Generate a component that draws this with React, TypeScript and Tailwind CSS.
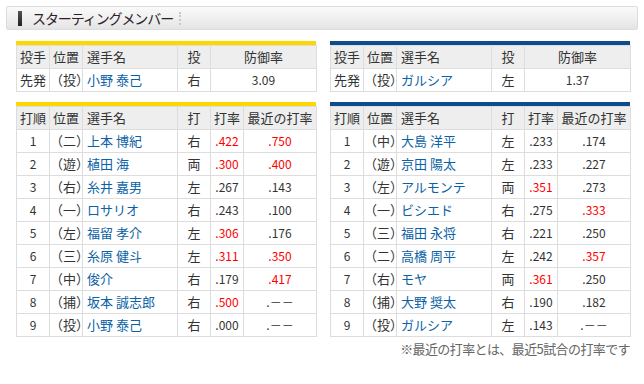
import React from "react";

type Bat = { o: string; p: string; n: string; h: string; a: string; ar?: boolean; r: string; rr?: boolean };

const left: Bat[] = [
  { o: "1", p: "（二）", n: "上本 博紀", h: "右", a: ".422", ar: true, r: ".750", rr: true },
  { o: "2", p: "（遊）", n: "植田 海", h: "両", a: ".300", ar: true, r: ".400", rr: true },
  { o: "3", p: "（右）", n: "糸井 嘉男", h: "左", a: ".267", r: ".143" },
  { o: "4", p: "（一）", n: "ロサリオ", h: "右", a: ".243", r: ".100" },
  { o: "5", p: "（左）", n: "福留 孝介", h: "左", a: ".306", ar: true, r: ".176" },
  { o: "6", p: "（三）", n: "糸原 健斗", h: "左", a: ".311", ar: true, r: ".350", rr: true },
  { o: "7", p: "（中）", n: "俊介", h: "右", a: ".179", r: ".417", rr: true },
  { o: "8", p: "（捕）", n: "坂本 誠志郎", h: "右", a: ".500", ar: true, r: ".－－" },
  { o: "9", p: "（投）", n: "小野 泰己", h: "右", a: ".000", r: ".－－" },
];

const right: Bat[] = [
  { o: "1", p: "（中）", n: "大島 洋平", h: "左", a: ".233", r: ".174" },
  { o: "2", p: "（遊）", n: "京田 陽太", h: "左", a: ".233", r: ".227" },
  { o: "3", p: "（左）", n: "アルモンテ", h: "両", a: ".351", ar: true, r: ".273" },
  { o: "4", p: "（一）", n: "ビシエド", h: "右", a: ".275", r: ".333", rr: true },
  { o: "5", p: "（三）", n: "福田 永将", h: "右", a: ".221", r: ".250" },
  { o: "6", p: "（二）", n: "高橋 周平", h: "左", a: ".242", r: ".357", rr: true },
  { o: "7", p: "（右）", n: "モヤ", h: "両", a: ".361", ar: true, r: ".250" },
  { o: "8", p: "（捕）", n: "大野 奨太", h: "右", a: ".190", r: ".182" },
  { o: "9", p: "（投）", n: "ガルシア", h: "左", a: ".143", r: ".－－" },
];

const th = "h-[23px] border border-[#dddddd] bg-[#eeeeee] font-normal p-0 leading-[22px]";
const td = "h-[23px] border border-[#dddddd] bg-white p-0 leading-[22px]";

function PitcherTable({ bar, name, hand, era }: { bar: string; name: string; hand: string; era: string }) {
  return (
    <div className="w-[300px]">
      <div className={`h-[4px] ${bar}`} />
      <table className="w-[300px] table-fixed border-collapse text-[13px] text-[#333333]">
        <colgroup>
          <col className="w-[33px]" />
          <col className="w-[33px]" />
          <col className="w-[95px]" />
          <col className="w-[33px]" />
          <col className="w-[106px]" />
        </colgroup>
        <thead>
          <tr>
            <th className={`${th} text-center`}>投手</th>
            <th className={`${th} text-center`}>位置</th>
            <th className={`${th} text-left pl-[4px]`}>選手名</th>
            <th className={`${th} text-center`}>投</th>
            <th className={`${th} text-center`}>防御率</th>
          </tr>
        </thead>
        <tbody>
          <tr>
            <td className={`${td} text-center`}>先発</td>
            <td className={`${td} text-center`}>（投）</td>
            <td className={`${td} text-left pl-[4px] text-[#0b62a6]`}>{name}</td>
            <td className={`${td} text-center`}>{hand}</td>
            <td className={`${td} text-center text-[12px]`}>{era}</td>
          </tr>
        </tbody>
      </table>
    </div>
  );
}

function BatTable({ bar, rows }: { bar: string; rows: Bat[] }) {
  return (
    <div className="w-[300px]">
      <div className={`h-[4px] ${bar}`} />
      <table className="w-[300px] table-fixed border-collapse text-[13px] text-[#333333]">
        <colgroup>
          <col className="w-[33px]" />
          <col className="w-[33px]" />
          <col className="w-[95px]" />
          <col className="w-[33px]" />
          <col className="w-[33px]" />
          <col className="w-[73px]" />
        </colgroup>
        <thead>
          <tr>
            <th className={`${th} text-center`}>打順</th>
            <th className={`${th} text-center`}>位置</th>
            <th className={`${th} text-left pl-[4px]`}>選手名</th>
            <th className={`${th} text-center`}>打</th>
            <th className={`${th} text-center`}>打率</th>
            <th className={`${th} text-center`}>最近の打率</th>
          </tr>
        </thead>
        <tbody>
          {rows.map((r) => (
            <tr key={r.o}>
              <td className={`${td} text-center text-[12px]`}>{r.o}</td>
              <td className={`${td} text-center`}>{r.p}</td>
              <td className={`${td} text-left pl-[4px] text-[#0b62a6]`}>{r.n}</td>
              <td className={`${td} text-center`}>{r.h}</td>
              <td className={`${td} text-center text-[12px] ${r.ar ? "text-[#ff0000]" : ""}`}>{r.a}</td>
              <td className={`${td} text-center text-[12px] ${r.rr ? "text-[#ff0000]" : ""}`}>{r.r}</td>
            </tr>
          ))}
        </tbody>
      </table>
    </div>
  );
}

export default function App() {
  return (
    <div className="w-[644px] h-[384px] bg-white pt-[6px] px-[6px] font-['Noto_Sans_CJK_JP','Noto_Sans',sans-serif] overflow-hidden">
      <div className="h-[24px] rounded-[2px] border border-[#dddddd] bg-gradient-to-b from-[#fafafa] via-[#f0f0f0] to-[#e4e4e4] flex items-center">
        <div className="ml-[11px] w-[4px] h-[15px] bg-gradient-to-b from-[#555555] to-[#222222]" />
        <span className="ml-[10px] text-[14px] leading-[22px] text-[#2e1d2c] tracking-[-1.1px]">
          スターティングメンバー
        </span>
        <div className="ml-[6px] h-[13px] border-l-2 border-dotted border-[#c8c8c8]" />
      </div>
      <div className="pl-[10px] mt-[11px] flex gap-[14px]">
        <PitcherTable bar="bg-[#fdd800]" name="小野 泰己" hand="右" era="3.09" />
        <PitcherTable bar="bg-[#0e4d8c]" name="ガルシア" hand="左" era="1.37" />
      </div>
      <div className="pl-[10px] mt-[10px] flex gap-[14px]">
        <BatTable bar="bg-[#fdd800]" rows={left} />
        <BatTable bar="bg-[#0e4d8c]" rows={right} />
      </div>
      <div className="w-[624px] text-right text-[13px] leading-[18px] mt-[3px] text-[#666666] tracking-[-0.6px]">
        ※最近の打率とは、最近5試合の打率です
      </div>
    </div>
  );
}
